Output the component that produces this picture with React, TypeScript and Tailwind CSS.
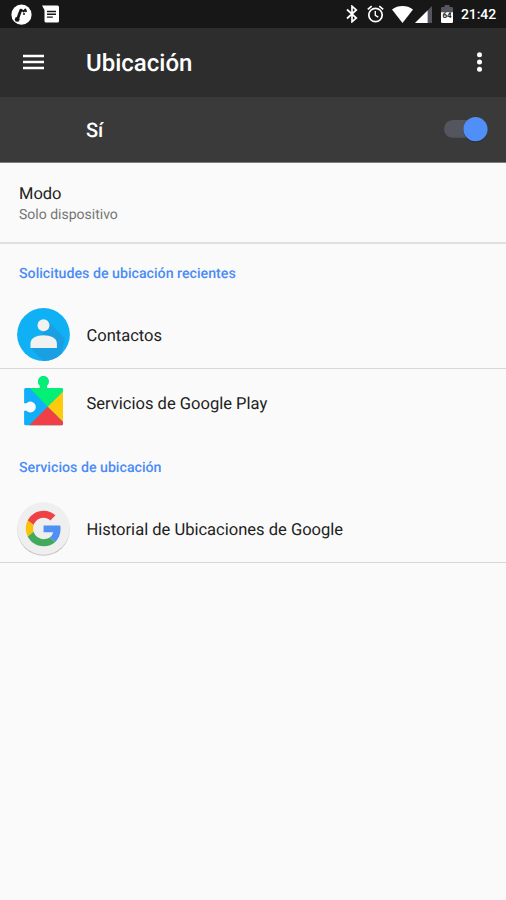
import type { ReactNode } from 'react';

function StatusBar() {
  return (
    <div className="h-7 bg-[#171717] flex items-center justify-between pl-[11px] pr-[10px]">
      <div className="flex items-center gap-[10px]">
        <svg width="21" height="21" viewBox="0 0 21 21">
          <circle cx="10.5" cy="10.7" r="10.1" fill="#fff" />
          <path d="M6.6 15 8.2 10.6 9.8 6.2" stroke="#171717" strokeWidth="2.8" fill="none" strokeLinecap="round" />
          <path d="M10 5.4 12.6 7.6 14.4 5.4 15.2 8" stroke="#171717" strokeWidth="1.8" fill="none" strokeLinejoin="round" />
          <circle cx="6.2" cy="15.4" r="2.4" fill="#171717" />
          <circle cx="13" cy="10" r="1" fill="#171717" />
        </svg>
        <svg width="17" height="18" viewBox="0 0 17 18">
          <path d="M0 .5H15.5A1.5 1.5 0 0 1 17 2V16A1.5 1.5 0 0 1 15.5 17.5H4A1.5 1.5 0 0 1 2.5 16V5Z" fill="#fff" />
          <path d="M5 6.5H14M5 9.3H14M5 12.1H10.8" stroke="#171717" strokeWidth="1.4" />
        </svg>
      </div>
      <div className="flex items-center">
        <svg width="12" height="18" viewBox="0 0 12 18" className="mr-[9px]">
          <path d="M1 4.5 10.3 13 6 16.8V1.2L10.3 5 1 13.5" stroke="#fff" strokeWidth="1.7" fill="none" />
        </svg>
        <svg width="17" height="18" viewBox="0 0 17 18" className="mr-[8px]">
          <circle cx="8.5" cy="10" r="6.7" stroke="#fff" strokeWidth="1.7" fill="none" />
          <path d="M8.3 6V10.3L11.3 12.2" stroke="#fff" strokeWidth="1.4" fill="none" />
          <path d="M.8 4.4 4.7 1.1M16.2 4.4 12.3 1.1" stroke="#fff" strokeWidth="1.7" />
        </svg>
        <svg width="21" height="17" viewBox="0 0 21 17" className="mr-[2px]">
          <path d="M0 3.4C6-1.1 15-1.1 21 3.4L10.5 17Z" fill="#fff" />
        </svg>
        <svg width="17" height="17" viewBox="0 0 17 17" className="mr-[9px]">
          <path d="M17 0V17H0Z" fill="#55555d" />
          <path d="M12.6 4.4V17H0Z" fill="#fff" />
        </svg>
        <svg width="12" height="18" viewBox="0 0 12 18" className="mr-[8px]">
          <path d="M3.5 0H8.5V2H10.8Q12 2 12 3.2V9H0V3.2Q0 2 1.2 2H3.5Z" fill="#55555d" />
          <path d="M0 7.3H12V16.8Q12 18 10.8 18H1.2Q0 18 0 16.8Z" fill="#fff" />
          <text x="6" y="12.6" fontSize="8" fontWeight="700" textAnchor="middle" fill="#171717">64</text>
        </svg>
        <span className="text-[14px] leading-none font-medium text-white w-[35px] tracking-[-0.1px] pt-[2px]">21:42</span>
      </div>
    </div>
  );
}

function ContactsIcon() {
  return (
    <svg width="53" height="53" viewBox="0.5 0.5 53 53">
      <defs>
        <clipPath id="disc">
          <circle cx="27" cy="27" r="26.4" />
        </clipPath>
      </defs>
      <circle cx="27" cy="27" r="26.4" fill="#10b0f5" />
      <path d="M31.2 13.2 48.5 31 43 54H27L14 40 23 30 28 24Z" fill="#1a9fe2" clipPath="url(#disc)" />
      <circle cx="27" cy="17.8" r="6" fill="#f1f1f1" />
      <path d="M14 40.5V36C14 30.5 20 27.8 27 27.8S40.4 30.5 40.4 36V40.5Z" fill="#f1f1f1" />
    </svg>
  );
}

function PlayServicesIcon() {
  return (
    <svg width="53" height="53" viewBox="0.5 0.5 53 53">
      <defs>
        <clipPath id="piece">
          <path d="M9.2 12.6H23.4V10A5.4 5.4 0 1 1 30.4 10V12.6H44.9A1.6 1.6 0 0 1 46.5 14.2V48.3A1.6 1.6 0 0 1 44.9 49.9H9.2A1.6 1.6 0 0 1 7.6 48.3V35.2H10A5.4 5.4 0 1 0 10 27.8H7.6V14.2A1.6 1.6 0 0 1 9.2 12.6Z" />
        </clipPath>
      </defs>
      <g clipPath="url(#piece)">
        <path d="M0 0H54V54H0Z" fill="#10aff8" />
        <path d="M13.2 12.6V0H54V8.6L31.2 31.3Z" fill="#04ef76" />
        <path d="M54 8.6V54L31.2 31.3Z" fill="#fecb0b" />
        <path d="M31.2 31.3 54 54H8.5Z" fill="#f04045" />
      </g>
    </svg>
  );
}

function GoogleIcon() {
  return (
    <svg width="53" height="54" viewBox="0.5 0 53 54">
      <circle cx="27" cy="27.6" r="26.2" fill="#c4c4c4" />
      <circle cx="27" cy="26.5" r="26.3" fill="#efefef" />
      <g transform="translate(9.3 8.7) scale(.74)">
        <path fill="#ee4245" d="M24 9.5c3.54 0 6.71 1.22 9.21 3.6l6.85-6.85C35.9 2.38 30.47 0 24 0 14.62 0 6.51 5.38 2.56 13.22l7.98 6.19C12.43 13.72 17.74 9.5 24 9.5z" />
        <path fill="#5090f5" d="M46.98 24.55c0-1.57-.15-3.09-.38-4.55H24v9.02h12.94c-.58 2.96-2.26 5.48-4.78 7.18l7.73 6c4.51-4.18 7.09-10.36 7.09-17.65z" />
        <path fill="#fbc20a" d="M10.53 28.59c-.48-1.45-.76-2.99-.76-4.59s.27-3.14.76-4.59l-7.98-6.19C.92 16.46 0 20.12 0 24c0 3.88.92 7.54 2.56 10.78l7.97-6.19z" />
        <path fill="#42aa5c" d="M24 48c6.48 0 11.93-2.13 15.89-5.81l-7.73-6c-2.15 1.45-4.92 2.3-8.16 2.3-6.26 0-11.57-4.22-13.47-9.91l-7.98 6.19C6.51 42.62 14.62 48 24 48z" />
      </g>
    </svg>
  );
}

function AppRow({ icon, label }: { icon: ReactNode; label: string }) {
  return (
    <div className="h-[67px] flex items-center pl-[17px]">
      {icon}
      <span className="ml-[16.5px] pt-[5px] leading-6 text-[16.55px] text-[#212121]">{label}</span>
    </div>
  );
}

function Heading({ children }: { children: ReactNode }) {
  return (
    <h2 className="pt-[21px] pb-[17px] pl-[19px] text-[14.2px] leading-[19px] font-medium text-[#4a8cf5]">{children}</h2>
  );
}

export default function App() {
  return (
    <div className="w-[506px] h-[900px] overflow-hidden bg-[#fafafa] font-[Roboto,sans-serif] [text-rendering:geometricPrecision]">
      <StatusBar />
      <header className="h-[69px] bg-[#2d2d2d] flex items-center pl-[23px] pr-[24px] pb-px">
        <svg width="21" height="16" viewBox="0 0 21 16">
          <path d="M0 2H21M0 8H21M0 14H21" stroke="#fff" strokeWidth="2.4" />
        </svg>
        <h1 className="ml-[42px] pt-[2px] text-[24px] leading-9 font-medium text-white flex-1">Ubicación</h1>
        <svg width="5" height="20" viewBox="0 0 5 20">
          <circle cx="2.5" cy="2.8" r="2.5" fill="#fff" />
          <circle cx="2.5" cy="10" r="2.5" fill="#fff" />
          <circle cx="2.5" cy="17.2" r="2.5" fill="#fff" />
        </svg>
      </header>
      <div className="h-[66px] bg-[#3a3a3a] border-b border-[#7c7c7c] flex items-center justify-between pl-[86px] pr-[18px]">
        <span className="text-[20px] font-medium text-white">Sí</span>
        <svg width="44" height="27" viewBox="0 0 44 27">
          <rect x="0" y="4" width="36" height="17.8" rx="8.9" fill="#53565e" />
          <circle cx="31.5" cy="14.3" r="12" fill="#2b2b2b" />
          <circle cx="31.5" cy="13.2" r="12.1" fill="#4f8ff7" />
        </svg>
      </div>
      <main>
        <section className="h-[81px] pl-[19px] pt-[21px] border-b-2 border-[#e0e0e0]">
          <p className="text-[16.5px] leading-[21px] text-[#212121]">Modo</p>
          <p className="text-[14px] leading-5 text-[#757575]">Solo dispositivo</p>
        </section>
        <Heading>Solicitudes de ubicación recientes</Heading>
        <div className="border-b border-[#d6d6d6]">
          <AppRow icon={<ContactsIcon />} label="Contactos" />
        </div>
        <div className="pb-0.5">
          <AppRow icon={<PlayServicesIcon />} label="Servicios de Google Play" />
        </div>
        <Heading>Servicios de ubicación</Heading>
        <div className="border-b border-[#d6d6d6]">
          <AppRow icon={<GoogleIcon />} label="Historial de Ubicaciones de Google" />
        </div>
      </main>
    </div>
  );
}
